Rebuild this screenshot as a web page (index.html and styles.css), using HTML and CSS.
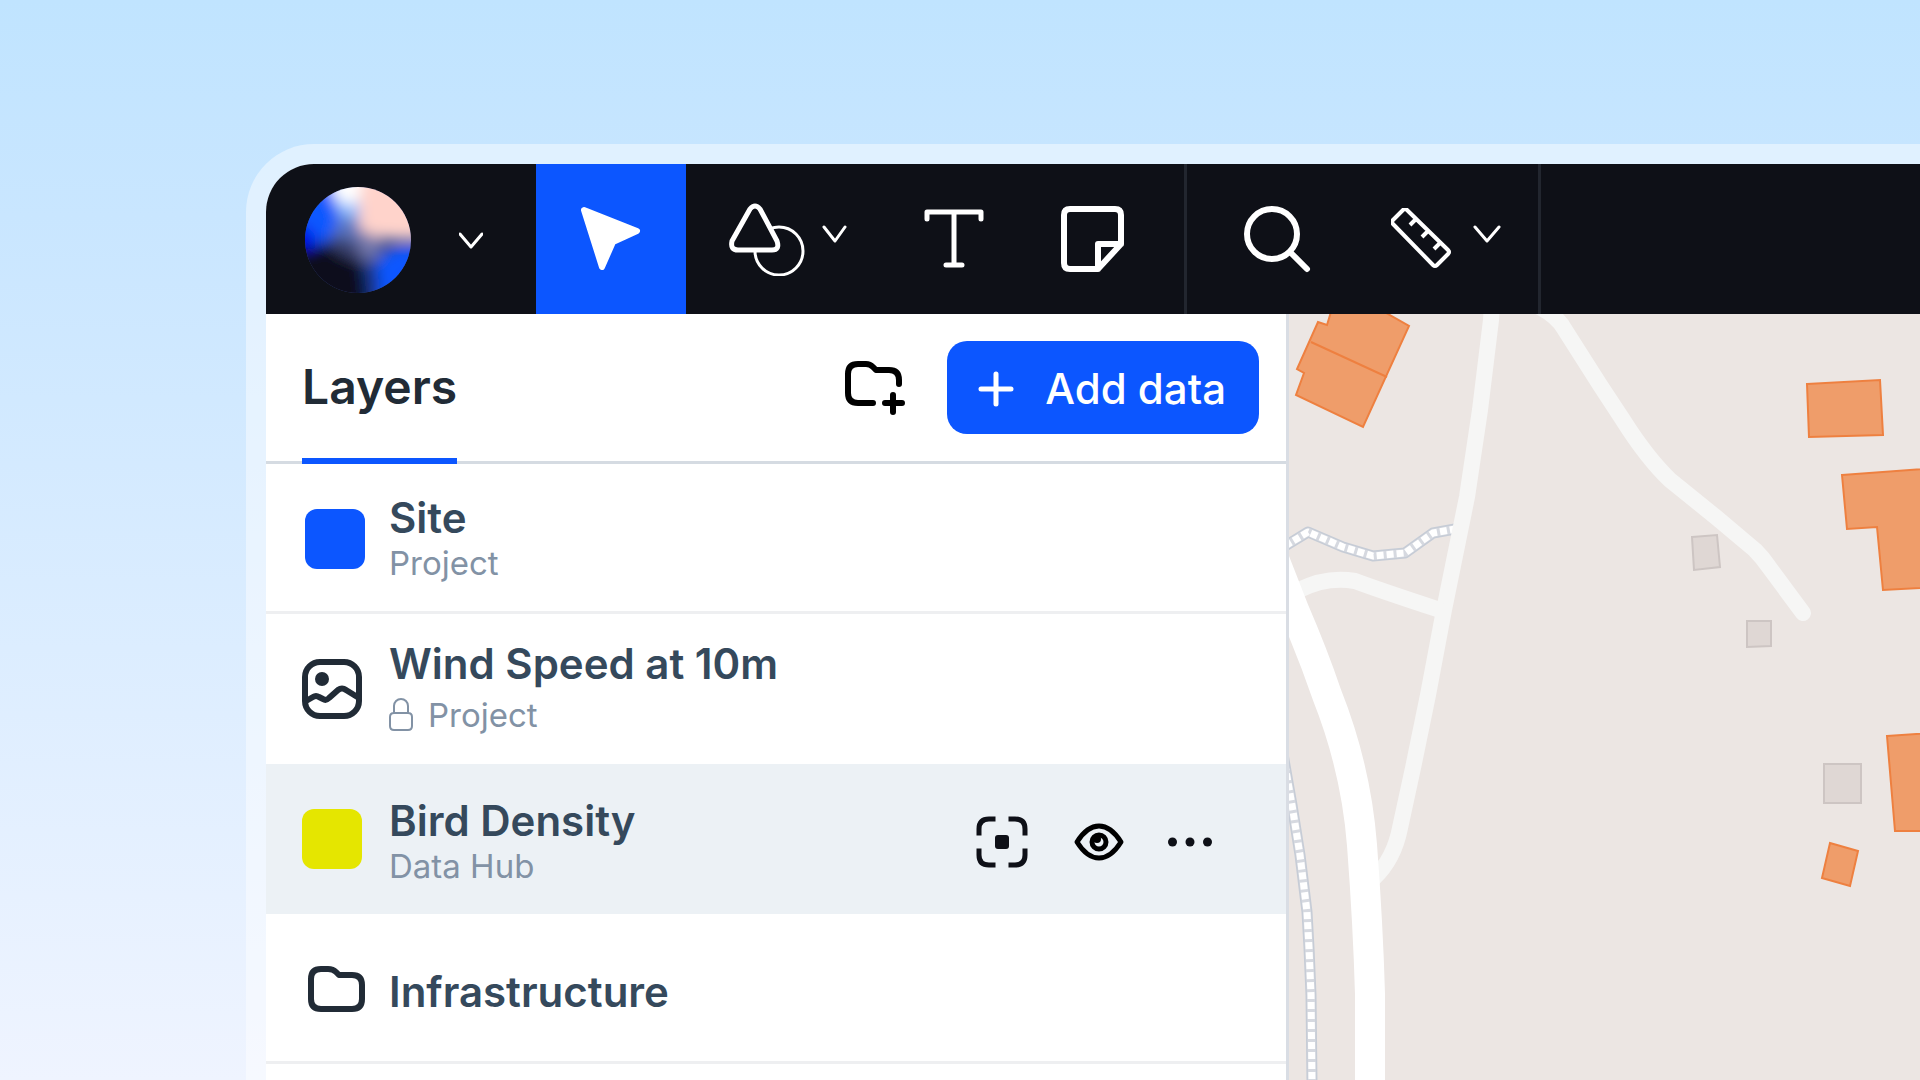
FILE: index.html
```html
<!DOCTYPE html>
<html lang="en">
<head>
<title>Map layers</title>
<meta charset="UTF-8">
<meta name="viewport" content="width=device-width, initial-scale=1">
<link rel="stylesheet" href="styles.css">
</head>
<body>
<div class="window">

<header class="toolbar">
	<button class="menu" aria-label="Main menu">
		<svg width="106" height="106" viewBox="0 0 106 106">
			<defs>
				<clipPath id="ball"><circle cx="53" cy="53" r="53"/></clipPath>
				<filter id="soft" x="-50%" y="-50%" width="200%" height="200%"><feGaussianBlur stdDeviation="7"/></filter>
			</defs>
			<g clip-path="url(#ball)">
				<rect width="106" height="106" fill="#3a4c90"/>
				<g filter="url(#soft)">
					<path d="M-30 -30H20L28 14L36 36L26 54L-30 62Z" fill="#0a58ff"/>
					<path d="M-30 40L0 38L12 50L8 62L-30 70Z" fill="#000ee6"/>
					<path d="M-40 64L8 62L24 54L42 64L60 84L66 146H-40Z" fill="#0c0e1c"/>
					<path d="M72 146L68 92L74 72L92 60L146 56V146Z" fill="#0c56ff"/>
					<path d="M66 146L58 84L70 74L74 92V146Z" fill="#123484"/>
					<path d="M26 8L54 4L56 36L38 36Z" fill="#8fbcff"/>
					<path d="M34 32L56 30L60 50L46 56L26 48Z" fill="#5a74c0"/>
					<path d="M26 48L46 52L62 62L60 76L42 70L24 60Z" fill="#3a4270"/>
					<path d="M50 42L72 48L78 60L68 74L54 64Z" fill="#7478ac"/>
					<path d="M54 -30H146V52H92L72 50L54 42L54 20Z" fill="#ffd3cb"/>
					<path d="M18 -30H60L54 14L40 18L28 8Z" fill="#fff"/>
				</g>
			</g>
		</svg>
		<svg width="24" height="20" viewBox="0 0 24 20"><path class="thin" d="M1 4L12 17L23 4"/></svg>
	</button>
	<button class="tool active" aria-label="Select">
		<svg width="62" height="66" viewBox="0 0 62 66"><path d="M4 4L57 25L33 36L22 61Z" fill="#fff" stroke="#fff" stroke-width="6" stroke-linejoin="round"/></svg>
	</button>
	<div class="group">
		<button aria-label="Shapes">
			<svg width="76" height="74" viewBox="0 0 76 74">
				<circle class="thin" cx="50" cy="49" r="24"/>
				<path d="M21 7Q26 1 31 7L48 39Q51 48 43 48H9Q1 48 3 39Z" fill="#0e1017" stroke="#fff" stroke-width="5" stroke-linejoin="round"/>
			</svg>
			<svg class="chev" width="25" height="18" viewBox="0 0 25 18"><path class="thin" d="M2 2L13 16L23 2"/></svg>
		</button>
		<button aria-label="Text">
			<svg width="60" height="60" viewBox="0 0 60 60"><path class="mid" d="M3 10V3H57V10M30 3V56M22 56H38"/></svg>
		</button>
		<button aria-label="Note">
			<svg width="63" height="66" viewBox="0 0 63 66"><path class="thick" d="M9 3H54Q60 3 60 9V38L37 63H9Q3 63 3 57V9Q3 3 9 3ZM60 38H37V63"/></svg>
		</button>
	</div>
	<div class="group group-measure">
		<button aria-label="Search">
			<svg width="67" height="67" viewBox="0 0 67 67"><circle class="thick" cx="28" cy="28" r="25"/><path class="thick" d="M47 47L63 63"/></svg>
		</button>
		<button aria-label="Measure">
			<svg width="61" height="62" viewBox="0 0 61 62"><path class="ruler" d="M12 2Q14 0 16 2L57 42Q59 44 57 46L46 57Q44 59 42 57L2 16Q0 14 2 12ZM25 11L19 17M37 23L31 29M49 35L43 41"/></svg>
			<svg class="chev" width="28" height="18" viewBox="0 0 28 18"><path class="thin" d="M2 2L14 16L26 2"/></svg>
		</button>
	</div>
</header>

<div class="content">
<section class="panel">
	<div class="panel-head">
		<h2>Layers</h2>
		<button class="new-folder" aria-label="New folder">
			<svg width="60" height="56" viewBox="0 0 60 56"><path class="dark" d="M28 43H13Q3 43 3 33V14Q3 4 13 4H21Q25 4 28 7L31 10H44Q54 10 54 20V24M48 35V52M40 43H57"/></svg>
		</button>
		<button class="add">
			<svg width="36" height="36" viewBox="0 0 36 36"><path d="M18 3V33M3 18H33" fill="none" stroke="#fff" stroke-width="5" stroke-linecap="round"/></svg>
			Add data
		</button>
	</div>

	<ul class="layers">
		<li>
			<div class="icon icon-end"><span class="swatch blue"></span></div>
			<div class="name"><h3>Site</h3><p>Project</p></div>
		</li>
		<li class="locked">
			<div class="icon">
				<svg width="60" height="60" viewBox="0 0 60 60">
					<rect class="slate" x="3" y="3" width="54" height="54" rx="15"/>
					<circle cx="20" cy="20" r="7" fill="#212b36"/>
					<path class="slate" d="M4 42L11 38Q14 36 17 38L21 40Q24 42 27 39L36 31Q40 28 44 31L57 39"/>
				</svg>
			</div>
			<div class="name">
				<h3>Wind Speed at 10m</h3>
				<p><svg width="24" height="34" viewBox="0 0 24 34"><path d="M5 15V8A7 7 0 0 1 19 8V15M5 15H19Q23 15 23 19V28Q23 32 19 32H5Q1 32 1 28V19Q1 15 5 15Z" fill="none" stroke="#8292a5" stroke-width="2"/></svg>Project</p>
			</div>
		</li>
		<li class="selected">
			<div class="icon"><span class="swatch yellow"></span></div>
			<div class="name"><h3>Bird Density</h3><p>Data Hub</p></div>
			<div class="actions">
				<button aria-label="Zoom to layer">
					<svg width="52" height="52" viewBox="0 0 52 52"><path d="M3 17V13Q3 3 13 3H17M35 3H39Q49 3 49 13V17M49 35V39Q49 49 39 49H35M17 49H13Q3 49 3 39V35" fill="none" stroke="#0e1017" stroke-width="5" stroke-linecap="square"/><rect x="19" y="19" width="14" height="14" rx="3" fill="#0e1017"/></svg>
				</button>
				<button aria-label="Toggle visibility">
					<svg width="52" height="38" viewBox="0 0 52 38"><path class="eye" d="M5 19Q15 3 27 3T49 19Q39 35 27 35T5 19Z"/><circle class="eye" cx="27" cy="19" r="7"/><circle cx="25" cy="16" r="4" fill="#000"/></svg>
				</button>
				<button aria-label="More">
					<svg width="44" height="10" viewBox="0 0 44 10" fill="#0e1017"><circle cx="4.5" cy="5" r="4.5"/><circle cx="22" cy="5" r="4.5"/><circle cx="39.5" cy="5" r="4.5"/></svg>
				</button>
			</div>
		</li>
		<li class="folder">
			<div class="icon icon-end">
				<svg width="57" height="48" viewBox="0 0 57 48"><path class="slate" d="M13 4H20Q25 4 28 7L31 10H44Q54 10 54 20V34Q54 44 44 44H13Q3 44 3 34V14Q3 4 13 4Z"/></svg>
			</div>
			<div class="name"><h3>Infrastructure</h3></div>
		</li>
	</ul>
</section>

<main class="map">
	<svg viewBox="0 0 631 766" preserveAspectRatio="xMinYMin slice">
		<!-- footpaths -->
		<g class="path-edge">
			<path id="path1" d="M-4 232L19 218L54 233L84 242L116 239L144 219L166 215"/>
			<path id="path2" d="M-6 440L3 491L11 541L18 598L20 634L22 681L23 770"/>
		</g>
		<g class="path-fill"><use href="#path1"/><use href="#path2"/></g>
		<g class="path-dots"><use href="#path1"/><use href="#path2"/></g>
		<!-- roads -->
		<path class="road" d="M203 -10L202 6L191 96L178 183L155 296L139 381L124 454L111 514Q105 545 85 564"/>
		<path class="road" d="M10 276Q38 262 66 267Q90 276 151 296"/>
		<path class="road" d="M240 -12Q268 0 276 16L311 71L334 106Q358 144 381 166L428 204L466 236Q474 244 480 253L514 299"/>
		<path class="road main" d="M-20 232L5 296Q24 340 38 381Q67 454 73 531Q79 610 81 680V776"/>
		<!-- buildings -->
		<g class="house">
			<path d="M45 -12H78L120 12L74 113L7 81L15 59L8 55L29 8L38 11Z"/>
			<path d="M22 28L98 63"/>
			<path d="M518 70L591 66L594 121L520 123Z"/>
			<path d="M553 161L700 150V270L594 276L588 213L558 215Z"/>
			<path d="M598 422L700 415V517H606Z"/>
			<path d="M541 529L569 537L561 572L533 564Z"/>
		</g>
		<g class="shed">
			<path d="M403 223L428 221L431 253L405 256Z"/>
			<path d="M458 307H482V332L458 333Z"/>
			<path d="M535 450H572V489H535Z"/>
		</g>
	</svg>
</main>
</div>

</div>
</body>
</html>
```
FILE: styles.css
```css
* {
	box-sizing: border-box;
}

body {
	margin: 0;
	height: 100vh;
	display: flex;
	overflow: hidden;
	padding: 144px 0 0 246px;
	font-family: Inter, "Liberation Sans", sans-serif;
	background: linear-gradient(#c0e4ff 0%, #c9e6ff 20%, #dcedff 60%, #eff4ff 100%);
}

h2, h3, p, ul {
	margin: 0;
	padding: 0;
}

button {
	border: 0;
	padding: 0;
	background: none;
	font: inherit;
	display: flex;
	align-items: center;
	cursor: pointer;
}

svg {
	display: block;
	flex-shrink: 0;
}

.window {
	flex: 1;
	min-width: 0;
	display: flex;
	flex-direction: column;
	border: 20px solid rgba(255, 255, 255, 0.45);
	border-right: 0;
	border-bottom: 0;
	border-top-left-radius: 68px;
	background: white;
	background-clip: padding-box;
	overflow: hidden;
}

/* toolbar */

.toolbar {
	display: flex;
	height: 150px;
	flex-shrink: 0;
	background: #0e1017;
}

.menu {
	width: 270px;
	padding: 2px 0 0 39px;
	gap: 48px;
}

.tool {
	width: 150px;
	justify-content: center;
}

.active {
	background: #0c56ff;
}

.group {
	display: flex;
	gap: 77px;
	padding: 0 60px 0 43px;
	border-right: 3px solid #22262f;
}

.group-measure {
	gap: 80px;
	padding: 0 37px 0 57px;
}

.group button {
	gap: 17px;
}

.group-measure button {
	gap: 21px;
}

.chev {
	margin-bottom: 10px;
}

.thin, .mid, .thick, .ruler {
	fill: none;
	stroke: white;
	stroke-width: 3;
	stroke-linecap: round;
	stroke-linejoin: round;
}

.mid {
	stroke-width: 5;
}

.thick {
	stroke-width: 6;
}

.ruler {
	stroke-width: 4;
	stroke-linecap: butt;
}

/* layers panel */

.content {
	flex: 1;
	min-height: 0;
	display: flex;
}

.panel {
	width: 1023px;
	flex-shrink: 0;
	border-right: 3px solid #d9dde4;
}

.panel-head {
	display: flex;
	align-items: center;
	height: 150px;
	padding: 0 27px 0 36px;
	border-bottom: 3px solid #d5dbe2;
}

.panel-head h2 {
	height: 150px;
	margin-right: auto;
	margin-bottom: -3px;
	font-size: 48px;
	font-weight: 600;
	line-height: 146px;
	color: #212b36;
	border-bottom: 6px solid #0c56ff;
}

.new-folder {
	margin-right: 42px;
}

.dark, .slate, .eye {
	fill: none;
	stroke: black;
	stroke-width: 6;
	stroke-linecap: round;
	stroke-linejoin: round;
}

.slate {
	stroke: #212b36;
}

.eye {
	stroke-width: 5;
}

.add {
	height: 93px;
	padding: 2px 33px 0 31px;
	gap: 31px;
	border-radius: 20px;
	background: #0c56ff;
	color: white;
	font-size: 42px;
	font-weight: 500;
}

.layers {
	list-style: none;
}

.layers li {
	display: flex;
	align-items: center;
	height: 150px;
	padding-left: 36px;
	border-bottom: 3px solid #eeeff1;
}

.icon {
	display: flex;
	width: 63px;
	margin-right: 24px;
}

.icon-end {
	justify-content: flex-end;
	padding-top: 2px;
}

.swatch {
	width: 60px;
	height: 60px;
	border-radius: 12px;
}

.blue {
	background: #0c56ff;
}

.yellow {
	background: #e5e600;
}

.name h3 {
	font-size: 42px;
	font-weight: 600;
	line-height: 50px;
	color: #35495c;
}

.name p {
	display: flex;
	align-items: center;
	gap: 15px;
	font-size: 33px;
	line-height: 40px;
	color: #8292a5;
}

.layers .locked, .layers .selected {
	border-bottom: 0;
}

.locked .name p {
	line-height: 52px;
}

.locked .name {
	padding-top: 2px;
}

.selected {
	background: #ecf1f5;
}

.selected .name {
	padding-top: 4px;
}

.folder .name {
	padding-top: 8px;
}

.actions {
	display: flex;
	gap: 44px;
	margin-left: auto;
	padding: 6px 74px 0 0;
}

/* map */

.map {
	flex: 1;
	min-width: 0;
	background: #ece6e3;
}

.map svg {
	width: 100%;
	height: 100%;
}

.road {
	fill: none;
	stroke: #f6f6f5;
	stroke-width: 16;
	stroke-linecap: round;
	stroke-linejoin: round;
}

.main {
	stroke: white;
	stroke-width: 30;
}

.path-edge, .path-fill, .path-dots {
	fill: none;
	stroke: #c6ccd6;
	stroke-width: 11;
	stroke-linejoin: round;
}

.path-fill {
	stroke: #d6d9e0;
	stroke-width: 8;
}

.path-dots {
	stroke: white;
	stroke-width: 7;
	stroke-dasharray: 7 3;
}

.house {
	fill: #ef9d6a;
	stroke: #ee8040;
	stroke-width: 2;
}

.shed {
	fill: #dfd7d4;
	stroke: #cdc5c3;
	stroke-width: 2;
}
```
